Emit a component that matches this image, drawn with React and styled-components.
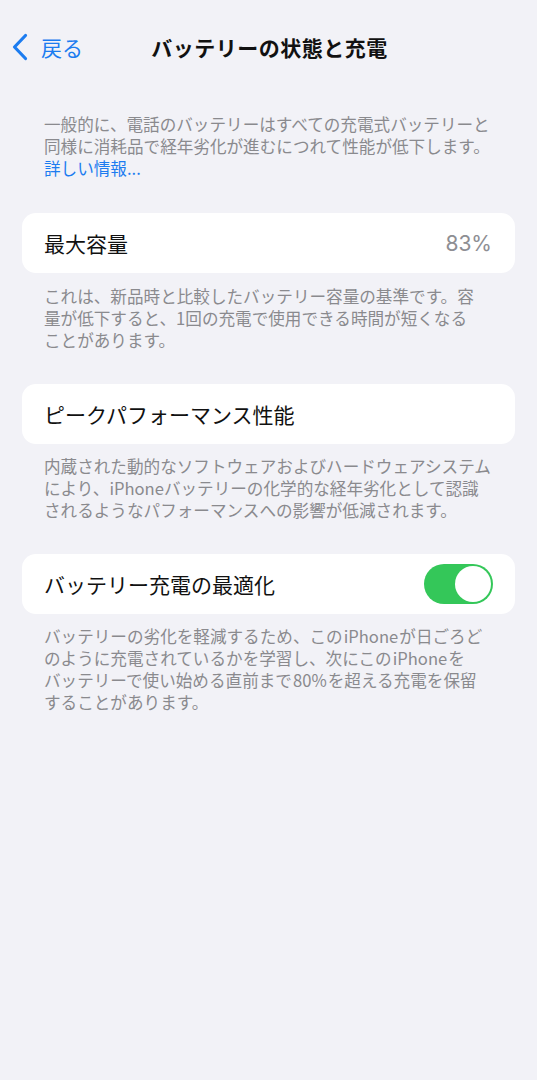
import React from "react";
import styled, { createGlobalStyle } from "styled-components";

const Global = createGlobalStyle`
  html, body { margin: 0; padding: 0; background: #f2f2f7; }
  body {
    font-family: "Noto Sans CJK JP", "Noto Sans", "Liberation Sans", sans-serif;
    -webkit-font-smoothing: antialiased;
  }
`;

const Page = styled.div`
  width: 537px;
  min-height: 1080px;
  background: #f2f2f7;
  display: flex;
  flex-direction: column;
`;

const NavBar = styled.div`
  position: relative;
  height: 56px;
  margin-top: 19px;
  display: flex;
  align-items: center;
  justify-content: center;
`;

const BackButton = styled.div`
  position: absolute;
  left: 12px;
  top: 0;
  height: 56px;
  display: flex;
  align-items: center;
  gap: 13px;
  color: #1c7cf0;
  font-size: 21px;
`;

const Title = styled.div`
  font-size: 21px;
  font-weight: 700;
  color: #111;
  letter-spacing: 0.5px;
  margin-left: 2px;
`;

const Content = styled.div`
  display: flex;
  flex-direction: column;
  padding: 38px 22px 0 22px;
`;

const Note = styled.p`
  margin: ${(p) => p.$mt || 0}px 0 0 0;
  padding: 0 22px;
  font-size: 16.6px;
  line-height: 22px;
  color: #8a8a8e;
  white-space: nowrap;
`;

const Link = styled.span`
  color: #1c7cf0;
`;

const Card = styled.div`
  margin-top: ${(p) => p.$mt}px;
  height: 60px;
  background: #ffffff;
  border-radius: 14px;
  display: flex;
  align-items: center;
  justify-content: space-between;
  padding: 0 22px;
`;

const Label = styled.span`
  font-size: 21px;
  color: #111;
`;

const Value = styled.span`
  font-size: 21px;
  color: #8e8e93;
  font-family: "Inter", "Liberation Sans", sans-serif;
  margin-right: 1px;
`;

const Track = styled.div`
  width: 69px;
  height: 40px;
  border-radius: 20px;
  background: #34c759;
  display: flex;
  align-items: center;
  justify-content: flex-end;
  padding: 2px;
  box-sizing: border-box;
`;

const Knob = styled.div`
  width: 36px;
  height: 36px;
  border-radius: 50%;
  background: #ffffff;
`;

const Chevron = () => (
  <svg width="16" height="28" viewBox="0 0 16 28" fill="none">
    <polyline
      points="13.5,2.5 2.5,14 13.5,25.5"
      stroke="#1c7cf0"
      strokeWidth="3.2"
      strokeLinecap="round"
      strokeLinejoin="round"
    />
  </svg>
);

export default function App() {
  return (
    <Page>
      <Global />
      <NavBar>
        <BackButton>
          <Chevron />
          <span>戻る</span>
        </BackButton>
        <Title>バッテリーの状態と充電</Title>
      </NavBar>
      <Content>
        <Note>
          一般的に、電話のバッテリーはすべての充電式バッテリーと
          <br />
          同様に消耗品で経年劣化が進むにつれて性能が低下します。
          <br />
          <Link>詳しい情報...</Link>
        </Note>

        <Card $mt={34}>
          <Label>最大容量</Label>
          <Value>83%</Value>
        </Card>
        <Note $mt={12}>
          これは、新品時と比較したバッテリー容量の基準です。容
          <br />
          量が低下すると、1回の充電で使用できる時間が短くなる
          <br />
          ことがあります。
        </Note>

        <Card $mt={33}>
          <Label>ピークパフォーマンス性能</Label>
        </Card>
        <Note $mt={11}>
          内蔵された動的なソフトウェアおよびハードウェアシステム
          <br />
          により、iPhoneバッテリーの化学的な経年劣化として認識
          <br />
          されるようなパフォーマンスへの影響が低減されます。
        </Note>

        <Card $mt={33}>
          <Label>バッテリー充電の最適化</Label>
          <Track>
            <Knob />
          </Track>
        </Card>
        <Note $mt={11}>
          バッテリーの劣化を軽減するため、この{"\u200A"}iPhone{"\u200A"}が日ごろど
          <br />
          のように充電されているかを学習し、次にこの{"\u200A"}iPhone{"\u200A"}を
          <br />
          バッテリーで使い始める直前まで{"\u200A"}80%{"\u200A"}を超える充電を保留
          <br />
          することがあります。
        </Note>
      </Content>
    </Page>
  );
}
